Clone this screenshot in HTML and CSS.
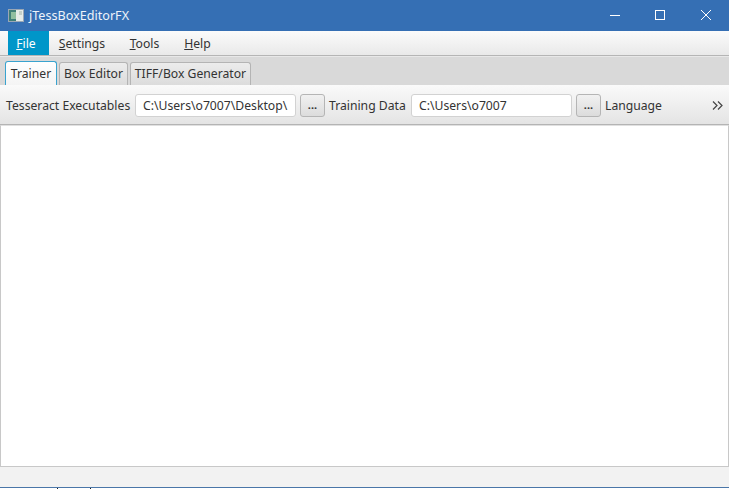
FILE: index.html
```html
<!DOCTYPE html>
<html lang="en">
<head>
<meta charset="utf-8">
<title>jTessBoxEditorFX</title>
<link rel="stylesheet" href="styles.css">
</head>
<body>
<div class="window">
  <header class="titlebar">
    <svg class="app-icon" width="16" height="13" viewBox="0 0 16 13">
      <rect x="0.5" y="0.5" width="15" height="12" fill="#e6ece8" stroke="#9aa7b5"/>
      <rect x="1" y="1" width="7" height="11" fill="#3f7f78"/>
      <rect x="3" y="3" width="5" height="7" fill="#8fbf9f"/>
      <rect x="11" y="2" width="3" height="4" fill="#c4cfc8"/>
    </svg>
    <span class="title">jTessBoxEditorFX</span>
    <div class="window-controls">
      <svg class="wc" width="45" height="31" viewBox="0 0 45 31"><path d="M18 15.5h10" stroke="#fff" fill="none"/></svg>
      <svg class="wc" width="46" height="31" viewBox="0 0 46 31"><rect x="18.5" y="10.5" width="9" height="9" stroke="#fff" fill="none"/></svg>
      <svg class="wc" width="46" height="31" viewBox="0 0 46 31"><path d="M18 10l10 10M28 10l-10 10" stroke="#fff" fill="none"/></svg>
    </div>
  </header>
  <nav class="menubar">
    <span class="menu m-file active"><u>F</u>ile</span>
    <span class="menu m-settings"><u>S</u>ettings</span>
    <span class="menu m-tools"><u>T</u>ools</span>
    <span class="menu m-help"><u>H</u>elp</span>
  </nav>
  <div class="tabs">
    <span class="tab t-trainer selected">Trainer</span>
    <span class="tab t-box">Box Editor</span>
    <span class="tab t-tiff">TIFF/Box Generator</span>
  </div>
  <div class="toolbar">
    <span class="label l-tess">Tesseract Executables</span>
    <span class="field">C:\Users\o7007\Desktop\</span>
    <span class="btn">...</span>
    <span class="label l-train">Training Data</span>
    <span class="field">C:\Users\o7007</span>
    <span class="btn">...</span>
    <span class="label">Language</span>
    <svg class="more" width="11" height="9" viewBox="0 0 11 9"><path d="M1 .5l4 4-4 4M6 .5l4 4-4 4" stroke="#444" stroke-width="1.2" fill="none"/></svg>
  </div>
  <main class="content"></main>
  <div class="status"></div>
  <div class="edge"></div>
  <div class="taskbar"><i class="tick one"></i><i class="tick two"></i></div>
</div>
</body>
</html>
```
FILE: styles.css
```css
* { box-sizing: border-box; }
html, body { margin: 0; padding: 0; }
body { width: 729px; height: 489px; overflow: hidden; background: #fff; font-family: "Noto Sans", "Open Sans", sans-serif; font-size: 12.2px; color: #333; }
.window { display: flex; flex-direction: column; height: 489px; }
.titlebar { height: 31px; background: #356fb4; display: flex; align-items: center; padding-left: 8px; color: #fff; flex: none; }
.app-icon { flex: none; }
.title { margin-left: 5px; font-size: 12.6px; color: #eef3fa; }
.window-controls { margin-left: auto; display: flex; }
.wc { display: block; }
.menubar { height: 25px; flex: none; display: flex; padding-left: 8px; background: linear-gradient(#fbfbfb, #e9e9e9); border-bottom: 1px solid #b5b5b5; }
.menu { line-height: 25px; text-align: center; }
.m-file { width: 41px; padding-right: 5px; }
.m-settings { width: 66px; }
.m-tools { width: 59px; }
.m-help { width: 47px; }
.menu.active { background: #0096c9; color: #fff; }
.tabs { height: 29px; flex: none; display: flex; align-items: flex-end; gap: 2px; padding-left: 5px; background: #d9d9d9; border-top: 1px solid #e8e8e8; }
.tab { height: 23px; line-height: 22px; text-align: center; background: linear-gradient(#ececec, #dcdcdc); border: 1px solid #b4b4b4; border-bottom: 0; border-radius: 3px 3px 0 0; white-space: nowrap; }
.t-trainer { width: 52px; }
.t-box { width: 69px; }
.t-tiff { width: 121px; }
.tab.selected { background: linear-gradient(#fff, #f4f4f4); border: 1px solid #39a3cf; border-bottom: 0; height: 24px; line-height: 23px; }
.toolbar { height: 40px; flex: none; display: flex; align-items: center; padding: 1px 0 0 6px; background: linear-gradient(#fafafa, #e4e4e4); border-bottom: 1px solid #b4b4b4; }
.label { white-space: nowrap; }
.l-tess { width: 129px; }
.l-train { width: 82px; }
.field { width: 161px; height: 23px; line-height: 21px; background: #fff; border: 1px solid #d2d2d2; border-radius: 3px; padding: 0 7px; overflow: hidden; white-space: nowrap; }
.btn { width: 25px; height: 23px; margin: 0 4px; line-height: 20px; text-align: center; background: linear-gradient(#f1f1f1, #dcdcdc); border: 1px solid #b5b5b5; border-radius: 3px; font-size: 11px; font-weight: 700; }
.more { margin-left: auto; margin-right: 6px; }
.content { flex: 1; background: #fff; border: 1px solid #c8c8c8; border-top: 1px solid #e0e0e0; }
.status { height: 20px; flex: none; background: #f2f2f2; }
.edge { height: 1px; flex: none; background: #4a76a8; }
.taskbar { height: 1px; flex: none; background: #fff; position: relative; }
.tick { position: absolute; top: 0; width: 1px; height: 1px; background: #222; }
.tick.one { left: 57px; }
.tick.two { left: 90px; }
```
